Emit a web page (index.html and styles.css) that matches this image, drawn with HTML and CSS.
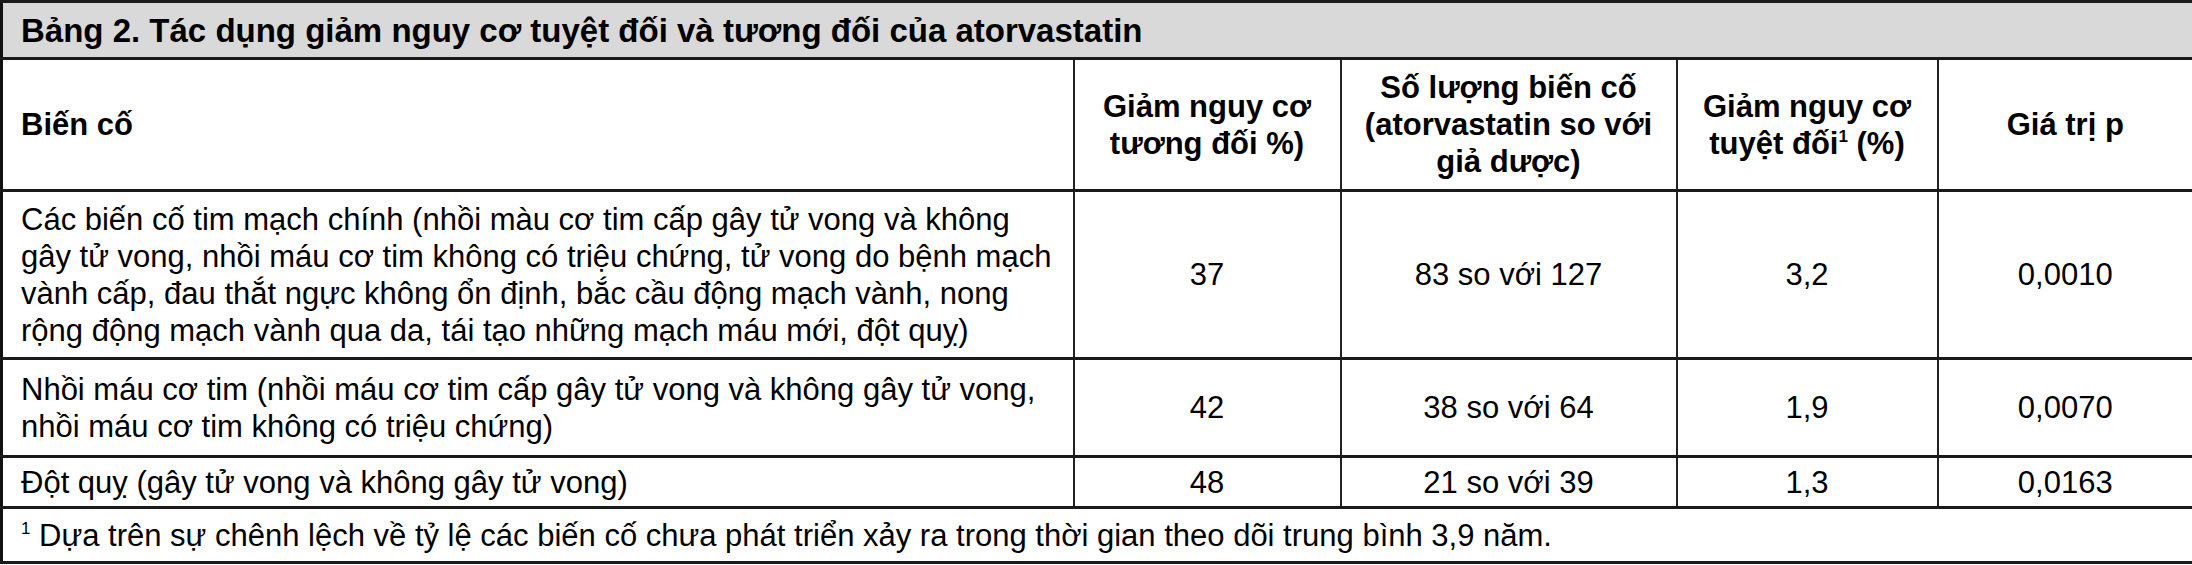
FILE: index.html
```html
<!DOCTYPE html>
<html lang="vi">
<head>
<meta charset="utf-8">
<title>Bảng 2</title>
<link rel="stylesheet" href="styles.css">
</head>
<body>
<table class="tbl">
  <colgroup>
    <col class="c0">
    <col class="c1">
    <col class="c2">
    <col class="c3">
    <col class="c4">
  </colgroup>
  <tr class="r-title">
    <td colspan="5" class="title">Bảng 2. Tác dụng giảm nguy cơ tuyệt đối và tương đối của atorvastatin</td>
  </tr>
  <tr class="r-head">
    <th class="left">Biến cố</th>
    <th>Giảm nguy cơ<br>tương đối %)</th>
    <th>Số lượng biến cố<br>(atorvastatin so với<br>giả dược)</th>
    <th>Giảm nguy cơ<br>tuyệt đối<sup>1</sup> (%)</th>
    <th>Giá trị p</th>
  </tr>
  <tr class="r1">
    <td class="left">Các biến cố tim mạch chính (nhồi màu cơ tim cấp gây tử vong và không<br>gây tử vong, nhồi máu cơ tim không có triệu chứng, tử vong do bệnh mạch<br>vành cấp, đau thắt ngực không ổn định, bắc cầu động mạch vành, nong<br>rộng động mạch vành qua da, tái tạo những mạch máu mới, đột quỵ)</td>
    <td>37</td>
    <td>83 so với 127</td>
    <td>3,2</td>
    <td>0,0010</td>
  </tr>
  <tr class="r2">
    <td class="left">Nhồi máu cơ tim (nhồi máu cơ tim cấp gây tử vong và không gây tử vong,<br>nhồi máu cơ tim không có triệu chứng)</td>
    <td>42</td>
    <td>38 so với 64</td>
    <td>1,9</td>
    <td>0,0070</td>
  </tr>
  <tr class="r3">
    <td class="left">Đột quỵ (gây tử vong và không gây tử vong)</td>
    <td>48</td>
    <td>21 so với 39</td>
    <td>1,3</td>
    <td>0,0163</td>
  </tr>
  <tr class="r-foot">
    <td colspan="5" class="foot"><sup>1</sup> Dựa trên sự chênh lệch về tỷ lệ các biến cố chưa phát triển xảy ra trong thời gian theo dõi trung bình 3,9 năm.</td>
  </tr>
</table>
</body>
</html>
```
FILE: styles.css
```css
html, body {
  margin: 0;
  padding: 0;
  background: #ffffff;
}
body {
  font-family: "Liberation Sans", Arial, sans-serif;
  color: #000;
}
.tbl {
  width: 2192px;
  border-collapse: collapse;
  table-layout: fixed;
  border: 3px solid #111;
  font-size: 31px;
  line-height: 37px;
}
.c0 { width: 1072px; }
.c1 { width: 267px; }
.c2 { width: 336px; }
.c3 { width: 261px; }
.c4 { width: 256px; }
.tbl td, .tbl th {
  border-left: 2px solid #222;
  border-right: 2px solid #222;
  border-top: 3px solid #1a1a1a;
  border-bottom: 3px solid #1a1a1a;
  text-align: center;
  vertical-align: middle;
  padding: 0 6px;
}
.tbl th {
  font-weight: bold;
}
.tbl .left {
  text-align: left;
  padding-left: 18px;
  white-space: nowrap;
}
.title {
  background: #d9d9d9;
  font-weight: bold;
  font-size: 33px;
  text-align: left !important;
  padding-left: 18px !important;
  white-space: nowrap;
}
.foot {
  text-align: left !important;
  padding-left: 18px !important;
  white-space: nowrap;
}
.r-title { height: 57px; }
.r-head { height: 132px; }
.r1 { height: 168px; }
.r2 { height: 98px; }
.r3 { height: 51px; }
.r-foot { height: 55px; }
sup {
  font-size: 17px;
  line-height: 0;
  vertical-align: 12px;
}
```
